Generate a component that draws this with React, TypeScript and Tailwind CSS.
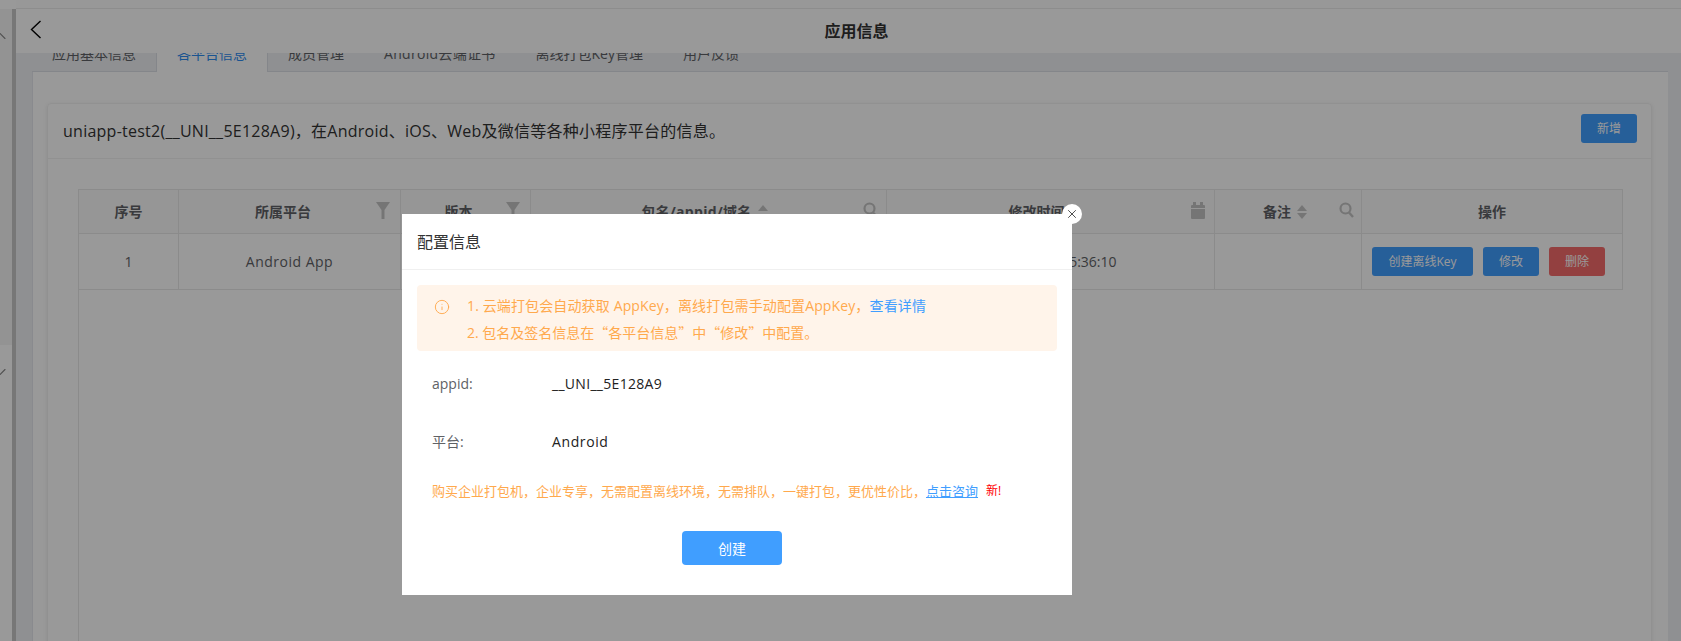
import { ChevronUp, ChevronDown, X, Info } from "lucide-react"

const font = "[font-family:'Open_Sans','Noto_Sans_CJK_SC',sans-serif]"

const tabs = [
    { label: "应用基本信息" },
    { label: "各平台信息", active: true },
    { label: "成员管理" },
    { label: "Android云端证书", wide: true },
    { label: "离线打包Key管理" },
    { label: "用户反馈" },
]

function Funnel() {
    return (
        <svg width="14" height="17" viewBox="0 0 14 17" className="fill-[#c4c4c4]">
            <path d="M0 0h14L8.5 8v9h-3V8z" />
        </svg>
    )
}

function Search() {
    return (
        <svg width="15" height="16" viewBox="0 0 15 16" fill="none" className="stroke-[#c4c4c4]">
            <circle cx="6.5" cy="6.5" r="5" strokeWidth="2.2" />
            <path d="M10 10.5l4 4.5" strokeWidth="2.4" />
        </svg>
    )
}

function Calendar() {
    return (
        <svg width="14" height="17" viewBox="0 0 14 17" className="fill-[#c4c4c4]">
            <path d="M2 0h3v3H2zM9 0h3v3H9z" />
            <path d="M1 3h12a1 1 0 0 1 1 1v2H0V4a1 1 0 0 1 1-1zM0 7h14v9a1 1 0 0 1-1 1H1a1 1 0 0 1-1-1z" />
        </svg>
    )
}

function Sort({ up }: { up?: boolean }) {
    return (
        <span className="flex flex-col gap-[2px] ml-[6px]">
            <span className="w-0 h-0 border-x-[5px] border-x-transparent border-b-[6px] border-b-[#c4c4c4]" />
            {!up && <span className="w-0 h-0 border-x-[5px] border-x-transparent border-t-[6px] border-t-[#c4c4c4]" />}
            {up && <span className="h-[6px]" />}
        </span>
    )
}

function HeadCell({ children, icon, pad, iconRight }: { children: React.ReactNode; icon?: React.ReactNode; pad?: string; iconRight?: string }) {
    return (
        <div className={`relative flex items-center justify-center border-r border-[#e8e8e8] font-bold text-[#606266] ${pad ?? ""}`}>
            {children}
            {icon && <span className={`absolute top-[12px] flex ${iconRight ?? "right-[10px]"}`}>{icon}</span>}
        </div>
    )
}

function Btn({ children, w, red }: { children: React.ReactNode; w: string; red?: boolean }) {
    return (
        <span className={`flex items-center justify-center h-[29px] rounded-[3px] text-[12px] text-white ${w} ${red ? "bg-[#f56c6c]" : "bg-[#409eff]"}`}>
            {children}
        </span>
    )
}

export default function App() {
    return (
        <div className={`relative flex h-screen overflow-hidden bg-white text-[14px] text-[#333] ${font}`}>
            {/* side nav */}
            <aside className="w-[12px] shrink-0 pt-[9px] flex flex-col">
                <div className="h-[336px] bg-[#f6f6f6] relative overflow-hidden">
                    <ChevronUp strokeWidth={1.3} className="absolute -left-[10px] top-[17px] w-[20px] h-[20px] text-[#888]" />
                </div>
                <div className="relative overflow-hidden flex-1">
                    <ChevronDown strokeWidth={1.3} className="absolute -left-[10px] top-[17px] w-[20px] h-[20px] text-[#888]" />
                </div>
            </aside>
            <div className="w-[4px] shrink-0 mt-[9px] bg-[#c6c6c6]" />

            <main className="flex-1 min-w-0 flex flex-col">
                <div className="h-[9px] shrink-0 border-b border-[#ececec] bg-[#fdfdfd]" />
                <header className="relative z-10 h-[44px] shrink-0 flex items-center bg-white">
                    <svg width="12" height="19" viewBox="0 0 12 19" fill="none" className="absolute left-[14px] top-[11px] stroke-black">
                        <path d="M10.5 1L1.5 9.5l9 8.5" strokeWidth="1.4" />
                    </svg>
                    <h1 className="flex-1 text-center pl-[16px] text-[16px] font-bold text-[#333]">应用信息</h1>
                </header>

                <div className="flex-1 min-h-0 -mt-[17px] bg-[#eef0f3] pl-[16px] pr-[13px]">
                    <div className="flex h-[36px] border-b border-[#dcdfe6]">
                        {tabs.map((tab) => (
                            <span
                                key={tab.label}
                                className={
                                    tab.active
                                        ? "px-[20px] h-[36px] leading-[36px] bg-white border-x border-[#dcdfe6] text-[#2d8cf0] -mb-px"
                                        : tab.wide
                                          ? "px-[20px] h-[36px] leading-[36px] text-[#606266] tracking-[0.3px]"
                                          : "px-[20px] h-[36px] leading-[36px] text-[#606266]"
                                }
                            >
                                {tab.label}
                            </span>
                        ))}
                    </div>

                    <div className="h-full bg-white pt-[31px] pl-[14px] pr-[16px] border-l border-[#e4e7ed]">
                        <section className="h-full rounded-[4px] border border-[#f2f2f2] shadow-[0_1px_4px_rgba(0,0,0,0.08)]">
                            <div className="h-[55px] flex justify-between pl-[15px] pr-[14px] border-b border-[#f2f2f2]">
                                <span className="self-center text-[16px] tracking-[0.25px] text-[#333]">uniapp-test2(__UNI__5E128A9)，在Android、iOS、Web及微信等各种小程序平台的信息。</span>
                                <span className="mt-[10px] flex items-center justify-center w-[56px] h-[29px] rounded-[3px] bg-[#409eff] text-[12px] text-white">新增</span>
                            </div>

                            <div className="ml-[30px] mt-[30px] w-[1545px] h-full border-l border-[#e8e8e8]">
                                <div className="grid grid-cols-[100px_222px_130px_356px_328px_147px_261px] h-[45px] border-y border-[#e8e8e8] bg-[#fafafa]">
                                    <HeadCell>序号</HeadCell>
                                    <HeadCell icon={<Funnel />} pad="pr-[13px]">所属平台</HeadCell>
                                    <HeadCell icon={<Funnel />} pad="pr-[14px]">版本</HeadCell>
                                    <HeadCell icon={<Search />} pad="pr-[8px] tracking-[0.3px]" iconRight="right-[8px]">
                                        包名/appid/域名<Sort up />
                                    </HeadCell>
                                    <HeadCell icon={<Calendar />} pad="pr-[28px]" iconRight="right-[9px]">修改时间</HeadCell>
                                    <HeadCell icon={<Search />} pad="pr-[6px]" iconRight="right-[7px]">
                                        备注<Sort />
                                    </HeadCell>
                                    <HeadCell>操作</HeadCell>
                                </div>
                                <div className="grid grid-cols-[100px_222px_130px_356px_328px_147px_261px] h-[56px] border-b border-[#e8e8e8] text-[#606266]">
                                    <div className="flex items-center justify-center border-r border-[#e8e8e8]">1</div>
                                    <div className="flex items-center justify-center border-r border-[#e8e8e8] tracking-[0.5px]">Android App</div>
                                    <div className="border-r border-[#e8e8e8]" />
                                    <div className="border-r border-[#e8e8e8]" />
                                    <div className="flex items-center justify-center border-r border-[#e8e8e8]">2021-11-25 15:36:10</div>
                                    <div className="border-r border-[#e8e8e8]" />
                                    <div className="flex items-center gap-[10px] pl-[10px] border-r border-[#e8e8e8]">
                                        <Btn w="w-[101px]">创建离线Key</Btn>
                                        <Btn w="w-[56px]">修改</Btn>
                                        <Btn w="w-[56px]" red>删除</Btn>
                                    </div>
                                </div>
                            </div>
                        </section>
                    </div>
                </div>
            </main>

            {/* dialog */}
            <div className="absolute inset-0 z-20 bg-black/40 pl-[402px] pt-[214px]">
                <div className="relative w-[670px] h-[381px] bg-white">
                    <button className="absolute -right-[10px] -top-[10px] flex items-center justify-center w-[20px] h-[20px] rounded-full bg-white">
                        <X strokeWidth={1.6} className="w-[14px] h-[14px] text-[#444]" />
                    </button>
                    <div className="h-[56px] flex items-center pl-[15px] border-b border-[#f0f0f0] text-[16px] text-[#333]">配置信息</div>

                    <div className="mx-[15px] mt-[15px] h-[66px] flex rounded-[4px] bg-[#fff4ea] text-[#ffa94d]">
                        <Info strokeWidth={1.4} className="w-[16px] h-[16px] mt-[14px] ml-[17px] shrink-0" />
                        <div className="ml-[17px] pt-[8px] leading-[26px]">
                            <p className="tracking-[0.13px]">1. 云端打包会自动获取 AppKey，离线打包需手动配置AppKey，<a className="text-[#409eff]">查看详情</a></p>
                            <p>
                                2. 包名及签名信息在
                                <span className="[font-family:'Noto_Sans_CJK_SC',sans-serif]">“各平台信息”</span>
                                中
                                <span className="[font-family:'Noto_Sans_CJK_SC',sans-serif]">“修改”</span>
                                中配置。
                            </p>
                        </div>
                    </div>

                    <dl className="pl-[30px] mt-[21px]">
                        <div className="flex h-[22px] items-center">
                            <dt className="w-[120px] text-[#606266]">appid:</dt>
                            <dd className="text-[#222] tracking-[0.3px]">__UNI__5E128A9</dd>
                        </div>
                        <div className="flex h-[22px] items-center mt-[36px]">
                            <dt className="w-[120px] text-[#606266]">平台:</dt>
                            <dd className="text-[#222] tracking-[0.6px]">Android</dd>
                        </div>
                    </dl>

                    <p className="flex items-center pl-[30px] mt-[29px] h-[22px] text-[13px] text-[#ffa94d]">
                        购买企业打包机，企业专享，无需配置离线环境，无需排队，一键打包，更优性价比，
                        <a className="text-[#409eff] underline">点击咨询</a>
                        <span className="ml-[8px] -mt-[3px] text-[12px] text-[#f00]">新!</span>
                    </p>

                    <div className="flex justify-center pr-[10px] mt-[28px]">
                        <button className="w-[100px] h-[34px] rounded-[4px] bg-[#409eff] text-white">创建</button>
                    </div>
                </div>
            </div>
        </div>
    )
}
